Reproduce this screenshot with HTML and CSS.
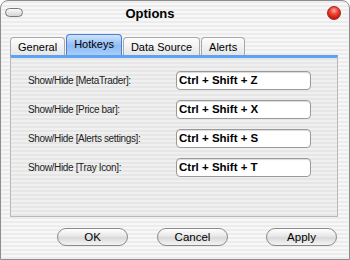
FILE: index.html
```html
<!DOCTYPE html>
<html lang="en">

<head>
    <meta charset="UTF-8">
    <title>Options</title>
    <link rel="stylesheet" href="styles.css">
</head>

<body>
    <div class="window">
        <div class="titlebar">
            <span class="toolbar-pill"></span>
            <h1>Options</h1>
            <span class="close-btn"></span>
        </div>

        <div class="tabs">
            <a class="tab">General</a>
            <a class="tab active">Hotkeys</a>
            <a class="tab">Data Source</a>
            <a class="tab">Alerts</a>
        </div>

        <div class="panel">
            <div class="row">
                <label>Show/Hide [MetaTrader]:</label>
                <input type="text" value="Ctrl + Shift + Z">
            </div>
            <div class="row">
                <label>Show/Hide [Price bar]:</label>
                <input type="text" value="Ctrl + Shift + X">
            </div>
            <div class="row">
                <label>Show/Hide [Alerts settings]:</label>
                <input type="text" value="Ctrl + Shift + S">
            </div>
            <div class="row">
                <label>Show/Hide [Tray Icon]:</label>
                <input type="text" value="Ctrl + Shift + T">
            </div>
        </div>

        <div class="buttons">
            <button class="btn btn-ok">OK</button>
            <button class="btn btn-cancel">Cancel</button>
            <button class="btn btn-apply">Apply</button>
        </div>
    </div>
</body>

</html>
```

FILE: styles.css
```css
* {
    margin: 0;
    padding: 0;
    box-sizing: border-box;
    font-family: 'Liberation Sans', Arial, sans-serif;
}

body {
    width: 350px;
    height: 260px;
    overflow: hidden;
    background: #fff;
}

.window {
    width: 350px;
    height: 260px;
    border: 1px solid #8e8e8e;
    border-radius: 8px 8px 0 0;
    overflow: hidden;
    background: repeating-linear-gradient(to bottom, #ececec 0, #ececec 2px, #f7f7f7 2px, #f7f7f7 4px);
}

.titlebar {
    height: 24px;
    position: relative;
    display: flex;
    align-items: center;
    justify-content: center;
}

.titlebar h1 {
    font-size: 13px;
    font-weight: bold;
    color: #000;
    margin-left: -50px;
    margin-top: 1px;
}

.toolbar-pill {
    position: absolute;
    left: 4px;
    top: 7px;
    width: 18px;
    height: 9px;
    border: 1px solid #777;
    border-radius: 5px;
    background: linear-gradient(#fafafa, #d4d4d4);
}

.close-btn {
    position: absolute;
    right: 8px;
    top: 5px;
    width: 14px;
    height: 14px;
    border-radius: 50%;
    border: 1px solid #a02020;
    background: radial-gradient(circle at 50% 30%, #ffb0a0 0, #f04838 35%, #c81810 75%, #e85040 100%);
}

.tabs {
    display: flex;
    align-items: flex-end;
    height: 30px;
    padding-left: 9px;
}

.tab {
    height: 18px;
    padding: 0 7px;
    font-size: 11px;
    line-height: 18px;
    color: #000;
    border: 1px solid #a9a9a9;
    border-bottom: none;
    border-radius: 4px 4px 0 0;
    background: linear-gradient(#fdfdfd, #e6e6e6);
    margin-right: 1px;
}

.tab.active {
    height: 21px;
    line-height: 19px;
    padding: 0 7px;
    border-color: #4a7ed8;
    background: linear-gradient(#cfe3fb, #8ebcf4 55%, #a9cdf8);
}

.panel {
    margin-left: 9px;
    width: 328px;
    height: 162px;
    border: 1px solid #b8b8b8;
    border-top: 3px solid #5ea2f2;
    padding: 13px 0 0 17px;
    display: flex;
    flex-direction: column;
    gap: 11px;
    background: repeating-linear-gradient(to bottom, #e6e6e6 0, #e6e6e6 2px, #f0f0f0 2px, #f0f0f0 4px);
}

.row {
    display: flex;
    align-items: center;
    height: 18px;
}

.row label {
    width: 148px;
    font-size: 10px;
    letter-spacing: -0.35px;
    color: #222;
}

.row input {
    width: 135px;
    height: 19px;
    border: 1px solid #9a9a9a;
    border-radius: 4px;
    background: #fff;
    padding: 0 2px;
    font-size: 11.5px;
    font-weight: bold;
    color: #000;
    box-shadow: inset 0 1px 1px rgba(0, 0, 0, 0.15);
}

.buttons {
    display: flex;
    padding: 11px 0 0 56px;
}

.btn {
    width: 71px;
    height: 18px;
    border: 1px solid #8a8a8a;
    border-radius: 9px;
    background: linear-gradient(#ffffff, #e4e4e4 50%, #d8d8d8 51%, #f4f4f4);
    font-size: 11.5px;
    color: #000;
}

.btn-cancel {
    margin-left: 29px;
}

.btn-apply {
    margin-left: 38px;
}
```
